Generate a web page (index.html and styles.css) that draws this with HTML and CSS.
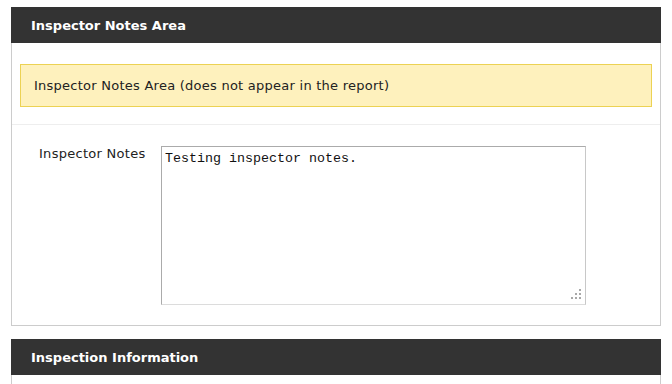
FILE: index.html
```html
<!DOCTYPE html>
<html>
<head>
<meta charset="utf-8">
<link rel="stylesheet" href="styles.css">
</head>
<body>
<div class="page">
  <section class="panel">
    <div class="panel-head">Inspector Notes Area</div>
    <div class="panel-body">
      <div class="notice-row">
        <div class="notice">Inspector Notes Area (does not appear in the report)</div>
      </div>
      <div class="field-row">
        <label class="field-label" for="notes">Inspector Notes</label>
        <div class="textarea-wrap">
          <textarea id="notes" class="notes">Testing inspector notes.</textarea>
          <span class="grip"><i></i><i></i><i></i><i></i><i></i><i></i></span>
        </div>
      </div>
    </div>
  </section>
  <section class="panel">
    <div class="panel-head">Inspection Information</div>
    <div class="panel-body short"></div>
  </section>
</div>
</body>
</html>
```

FILE: styles.css
```css
html, body {
  margin: 0;
  padding: 0;
  background: #fff;
  overflow: hidden;
}
body {
  font-family: "DejaVu Sans", Verdana, sans-serif;
  font-size: 13px;
  color: #222;
}
.page {
  padding: 7px 0 0 11px;
  width: 650px;
}
.panel {
  margin-bottom: 13px;
}
.panel-head {
  background: #333333;
  color: #fff;
  font-weight: bold;
  font-size: 13px;
  height: 36px;
  line-height: 37px;
  padding-left: 20px;
}
.panel-body {
  border: 1px solid #cccccc;
  border-top: none;
}
.panel-body.short {
  height: 20px;
}
.notice-row {
  padding: 21px 8px 17px 8px;
  border-bottom: 1px solid #eeeeee;
}
.notice {
  background: #fef1bd;
  border: 1px solid #ecd253;
  height: 41px;
  line-height: 42px;
  padding-left: 13px;
  font-size: 13px;
  letter-spacing: 0.25px;
  color: #222;
}
.field-row {
  display: flex;
  padding: 21px 0 20px 27px;
}
.field-label {
  width: 122px;
  font-size: 13px;
  letter-spacing: 0.28px;
  padding-top: 0;
  color: #222;
}
.textarea-wrap {
  position: relative;
  width: 425px;
  height: 159px;
}
.notes {
  box-sizing: border-box;
  width: 425px;
  height: 159px;
  margin: 0;
  border: 1px solid #ababab;
  border-bottom-color: #dcdcdc;
  border-right-color: #c8c8c8;
  padding: 4px 3px;
  font-family: "Liberation Mono", "Courier New", monospace;
  font-size: 13.33px;
  line-height: 15px;
  color: #111;
  resize: none;
  outline: none;
  display: block;
}
.grip {
  position: absolute;
  right: 5px;
  bottom: 6px;
  width: 10px;
  height: 10px;
  display: grid;
  grid-template-columns: repeat(3, 2px);
  grid-template-rows: repeat(3, 2px);
  gap: 2px;
}
.grip i {
  display: block;
  width: 2px;
  height: 2px;
  background: #a8a8a8;
}
.grip i:nth-child(1) { grid-column: 3; grid-row: 1; }
.grip i:nth-child(2) { grid-column: 2; grid-row: 2; }
.grip i:nth-child(3) { grid-column: 3; grid-row: 2; }
.grip i:nth-child(4) { grid-column: 1; grid-row: 3; }
.grip i:nth-child(5) { grid-column: 2; grid-row: 3; }
.grip i:nth-child(6) { grid-column: 3; grid-row: 3; }
```
